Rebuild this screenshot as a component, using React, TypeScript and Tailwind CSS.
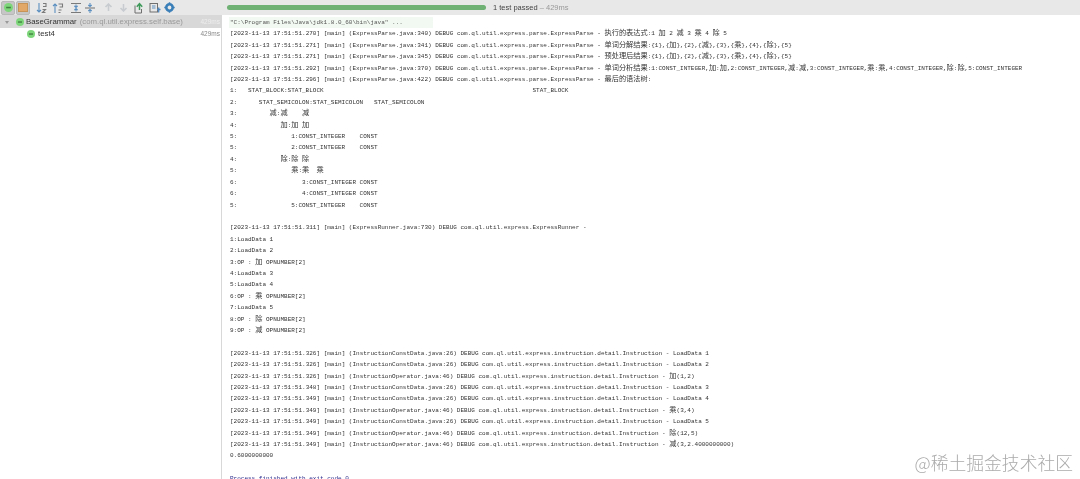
const W = ({ children }: { children: React.ReactNode }) => <span className="text-[7.2px] leading-[1px] font-['Noto_Sans_CJK_SC']">{children}</span>;

const log = (ts: string, src: string, rest: React.ReactNode) => (
  <>[2023-11-13 17:51:51.{ts}] [main] ({src}) DEBUG {rest}</>
);
const P = "com.ql.util.express.parse.ExpressParse - ";
const I = "com.ql.util.express.instruction.detail.Instruction - ";

const rows: React.ReactNode[] = [
  log("270", "ExpressParse.java:340", <>{P}<W>执行的表达式</W>:1 <W>加</W> 2 <W>减</W> 3 <W>乘</W> 4 <W>除</W> 5</>),
  log("271", "ExpressParse.java:341", <>{P}<W>单词分解结果</W>:{"{1},{"}<W>加</W>{"},{2},{"}<W>减</W>{"},{3},{"}<W>乘</W>{"},{4},{"}<W>除</W>{"},{5}"}</>),
  log("271", "ExpressParse.java:345", <>{P}<W>预处理后结果</W>:{"{1},{"}<W>加</W>{"},{2},{"}<W>减</W>{"},{3},{"}<W>乘</W>{"},{4},{"}<W>除</W>{"},{5}"}</>),
  log("292", "ExpressParse.java:370", <>{P}<W>单词分析结果</W>:1:CONST_INTEGER,<W>加</W>:<W>加</W>,2:CONST_INTEGER,<W>减</W>:<W>减</W>,3:CONST_INTEGER,<W>乘</W>:<W>乘</W>,4:CONST_INTEGER,<W>除</W>:<W>除</W>,5:CONST_INTEGER</>),
  log("296", "ExpressParse.java:422", <>{P}<W>最后的语法树</W>:</>),
  "1:   STAT_BLOCK:STAT_BLOCK                                                          STAT_BLOCK",
  "2:      STAT_SEMICOLON:STAT_SEMICOLON   STAT_SEMICOLON",
  <>3:         <W>减</W>:<W>减</W>    <W>减</W></>,
  <>4:            <W>加</W>:<W>加</W> <W>加</W></>,
  "5:               1:CONST_INTEGER    CONST",
  "5:               2:CONST_INTEGER    CONST",
  <>4:            <W>除</W>:<W>除</W> <W>除</W></>,
  <>5:               <W>乘</W>:<W>乘</W>  <W>乘</W></>,
  "6:                  3:CONST_INTEGER CONST",
  "6:                  4:CONST_INTEGER CONST",
  "5:               5:CONST_INTEGER    CONST",
  "",
  log("311", "ExpressRunner.java:730", "com.ql.util.express.ExpressRunner - "),
  "1:LoadData 1",
  "2:LoadData 2",
  <>3:OP : <W>加</W> OPNUMBER[2]</>,
  "4:LoadData 3",
  "5:LoadData 4",
  <>6:OP : <W>乘</W> OPNUMBER[2]</>,
  "7:LoadData 5",
  <>8:OP : <W>除</W> OPNUMBER[2]</>,
  <>9:OP : <W>减</W> OPNUMBER[2]</>,
  "",
  log("326", "InstructionConstData.java:26", I + "LoadData 1"),
  log("326", "InstructionConstData.java:26", I + "LoadData 2"),
  log("326", "InstructionOperator.java:46", <>{I}<W>加</W>(1,2)</>),
  log("348", "InstructionConstData.java:26", I + "LoadData 3"),
  log("349", "InstructionConstData.java:26", I + "LoadData 4"),
  log("349", "InstructionOperator.java:46", <>{I}<W>乘</W>(3,4)</>),
  log("349", "InstructionConstData.java:26", I + "LoadData 5"),
  log("349", "InstructionOperator.java:46", <>{I}<W>除</W>(12,5)</>),
  log("349", "InstructionOperator.java:46", <>{I}<W>减</W>(3,2.4000000000)</>),
  "0.6000000000",
  "",
];

const Ok = ({ size = 9 }: { size?: number }) => (
  <svg width={size} height={size} viewBox="0 0 10 10" className="shrink-0">
    <circle cx="5" cy="5" r="5" fill="#7ed67a" />
    <rect x="2.4" y="4.2" width="5.2" height="1.7" fill="#3f7f3f" />
  </svg>
);

const Tool = ({ children, on, className = "" }: { children: React.ReactNode; on?: boolean; className?: string }) => (
  <div className={`w-[14px] h-[14px] flex items-center justify-center shrink-0 ${on ? "bg-[#c6c6c6] rounded-[2px] border border-[#b8b8b8]" : ""} ${className}`}>{children}</div>
);

const Sort = ({ flip }: { flip?: boolean }) => (
  <svg width="12" height="12" viewBox="0 0 12 12" fill="none" strokeWidth="1.1">
    <path d={flip ? "M3 11V2M1 4l2-2 2 2" : "M3 1v9M1 8l2 2 2-2"} stroke="#5b8fc0" />
    <path d={flip ? "M6.5 2h4v3h-3M6.5 8h3M6.5 10.5h2" : "M7 1.5h3v3H7M6.5 7.5h3l-3 3h3"} stroke="#7a7a7a" />
  </svg>
);

const Fold = ({ out }: { out?: boolean }) => (
  <svg width="12" height="12" viewBox="0 0 12 12" fill="none" strokeWidth="1.1">
    <path d={out ? "M1 6h10" : "M1 1.5h10M1 10.5h10"} stroke="#7a7a7a" />
    <path d={out ? "M6 1v3M4.3 3l1.7 1.6L7.7 3M6 11V8M4.3 9L6 7.4 7.7 9" : "M6 2.5v2.7M4.3 3.8L6 5.4l1.7-1.6M6 9.5V6.8M4.3 8.2L6 6.6l1.7 1.6"} stroke="#5b8fc0" />
  </svg>
);

const Arrow = ({ down }: { down?: boolean }) => (
  <svg width="9" height="9" viewBox="0 0 9 9" fill="none" stroke="#c8ccd0" strokeWidth="1.6">
    <path d={down ? "M4.5 1v7M1.5 5l3 3 3-3" : "M4.5 8V1M1.5 4l3-3 3 3"} />
  </svg>
);

export default function App() {
  return (
    <div className="w-[1080px] h-[479px] overflow-hidden bg-white flex flex-col font-['Liberation_Sans',sans-serif] blur-[0.35px]">
      <div className="h-[15px] shrink-0 bg-[#e8e8e8] flex items-center">
        <div className="w-[221px] shrink-0 flex items-center pl-[1px]">
          <Tool on className="mr-[1px]"><Ok size={9} /></Tool>
          <Tool on><div className="w-[10px] h-[9px] bg-[#e2a868] border border-[#c79356]" /></Tool>
          <Tool className="ml-[5px] mr-[2px]"><Sort /></Tool>
          <Tool><Sort flip /></Tool>
          <Tool className="ml-[4px]"><Fold /></Tool>
          <Tool><Fold out /></Tool>
          <Tool className="ml-[4px] mr-[1px]"><Arrow /></Tool>
          <Tool className="mr-[2px]"><Arrow down /></Tool>
          <Tool className="mr-[2px]">
            <svg width="12" height="12" viewBox="0 0 12 12" fill="none">
              <path d="M2 3.5V11h6.5V7" stroke="#6f6f6f" />
              <path d="M6.5 8V2M3.8 4.8l2.7-3.2 2.7 3.2" stroke="#3f9a5a" strokeWidth="1.5" />
            </svg>
          </Tool>
          <Tool>
            <svg width="12" height="12" viewBox="0 0 12 12" fill="none">
              <rect x="1" y="1.5" width="7.5" height="8.5" stroke="#6f6f6f" />
              <path d="M3 4h3.5M3 6h3.5" stroke="#5b8fc0" />
              <path d="M8 7.5h3.5M9.7 5.5v5" stroke="#4f87bd" strokeWidth="1.3" />
            </svg>
          </Tool>
          <Tool>
            <svg width="11" height="11" viewBox="0 0 11 11">
              <circle cx="5.5" cy="5.5" r="3.2" fill="none" stroke="#3b7fb8" strokeWidth="2.6" />
              <path d="M5.5 .3v2M5.5 8.7v2M.3 5.5h2M8.7 5.5h2" stroke="#3b7fb8" strokeWidth="1.5" />
            </svg>
          </Tool>
        </div>
        <div className="flex items-center flex-1">
          <div className="w-[259px] h-[5px] ml-[6px] rounded-full bg-[#6fb074]" />
          <div className="ml-[7px] text-[7.5px] text-[#444] whitespace-nowrap">1 test passed <span className="text-[#999]">– 429ms</span></div>
        </div>
      </div>
      <div className="flex-1 flex min-h-0">
        <div className="w-[222px] shrink-0 border-r border-[#d8d8d8] text-[7.8px] text-[#333]">
          <div className="h-[13px] bg-[#d8d8d8] flex items-center pl-[5px] pr-[1px] pt-[1px]">
            <span className="w-0 h-0 border-x-[2px] border-x-transparent border-t-[3px] border-t-[#999] mr-[7px]" />
            <Ok size={8} />
            <span className="ml-[2px]">BaseGrammar</span>
            <span className="ml-[3px] text-[#999]">(com.ql.util.express.self.base)</span>
            <span className="ml-auto text-[#eee] text-[6.5px]">429ms</span>
          </div>
          <div className="h-[11px] flex items-center pl-[27px] pr-[1px]">
            <Ok size={8} />
            <span className="ml-[3px]">test4</span>
            <span className="ml-auto text-[#888] text-[6.5px]">429ms</span>
          </div>
        </div>
        <div className="flex-1 min-w-0 pl-[8px] pt-[2px] font-['Liberation_Mono',monospace] text-[6px] leading-[11.42px] whitespace-pre text-[#333] relative">
          <div className="h-[11.42px] bg-[#f2f9f2] w-[204px] -ml-[1px] pl-[1px] text-[#555]">"C:\Program Files\Java\jdk1.8.0_60\bin\java" ...</div>
          {rows.map((r, i) => (
            <div key={i} className="h-[11.42px]">{r}</div>
          ))}
          <div className="h-[11.42px] text-[#2a2a8c]">Process finished with exit code 0</div>
          <div className="absolute right-[7px] bottom-[5px] text-[17.8px] leading-[24px] text-[#aaaaaa] font-light font-['Noto_Sans_CJK_SC',sans-serif]">@稀土掘金技术社区</div>
        </div>
      </div>
    </div>
  );
}
